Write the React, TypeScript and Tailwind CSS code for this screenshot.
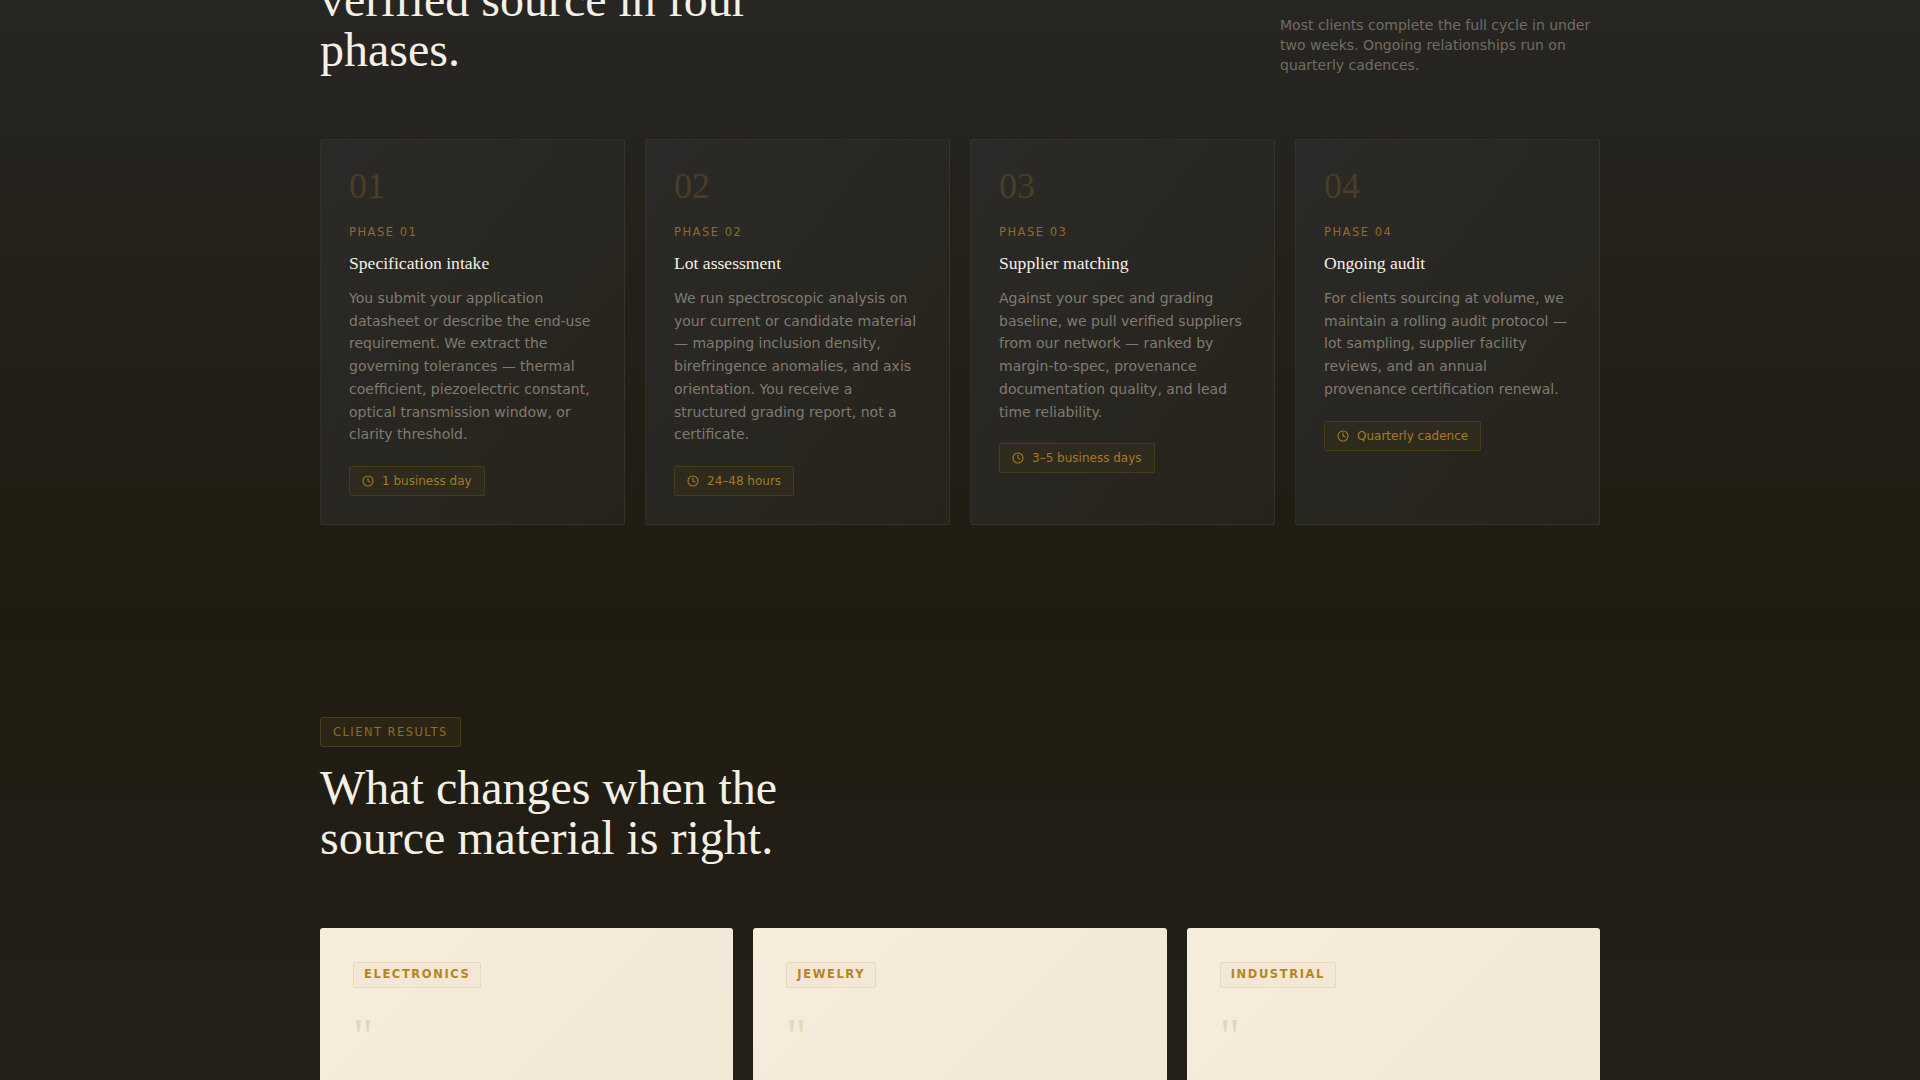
import { Clock } from 'lucide-react';

const sans = 'font-["DejaVu_Sans",sans-serif]';
const serif = 'font-["Liberation_Serif",serif]';

const phases = [
    {
        num: '01',
        label: 'PHASE 01',
        title: 'Specification intake',
        body: 'You submit your application datasheet or describe the end-use requirement. We extract the governing tolerances — thermal coefficient, piezoelectric constant, optical transmission window, or clarity threshold.',
        time: '1 business day',
    },
    {
        num: '02',
        label: 'PHASE 02',
        title: 'Lot assessment',
        body: 'We run spectroscopic analysis on your current or candidate material — mapping inclusion density, birefringence anomalies, and axis orientation. You receive a structured grading report, not a certificate.',
        time: '24–48 hours',
    },
    {
        num: '03',
        label: 'PHASE 03',
        title: 'Supplier matching',
        body: 'Against your spec and grading baseline, we pull verified suppliers from our network — ranked by margin-to-spec, provenance documentation quality, and lead time reliability.',
        time: '3–5 business days',
    },
    {
        num: '04',
        label: 'PHASE 04',
        title: 'Ongoing audit',
        body: 'For clients sourcing at volume, we maintain a rolling audit protocol — lot sampling, supplier facility reviews, and an annual provenance certification renewal.',
        time: 'Quarterly cadence',
    },
];

const results = ['ELECTRONICS', 'JEWELRY', 'INDUSTRIAL'];

function PhaseCard({ phase }: { phase: (typeof phases)[number] }) {
    return (
        <div className="rounded-[2px] border border-white/5 bg-gradient-to-br from-[#2a2a28] to-[#27231b] p-7">
            <div className={`${serif} text-[36px] leading-[36px] text-[#4a3e26] mb-[20px]`}>{phase.num}</div>
            <div className="text-[11.5px] tracking-[1.5px] leading-[17px] text-[#916c24] mb-[11px]">{phase.label}</div>
            <h3 className={`${serif} text-[17.6px] leading-[22px] text-[#f5f0e6] mb-[13px]`}>{phase.title}</h3>
            <p className="text-[14px] leading-[22.75px] text-[#807a70]">{phase.body}</p>
            <div className="mt-[20px] inline-flex h-[30px] items-center gap-2 rounded-[2px] border border-[#4a3a1c] bg-[#2f2a1e] px-3 text-[12px] text-[#a37a28]">
                <Clock size={12} strokeWidth={2.25} />
                <span>{phase.time}</span>
            </div>
        </div>
    );
}

export default function App() {
    return (
        <div className={`${sans} h-screen overflow-hidden bg-[#1f1b10]`}>
            {/* page is photographed scrolled down, so the first heading is cut */}
            <section className="-mt-[25px] bg-gradient-to-b from-[#282623] to-[#1f1b10] pb-24">
                <div className="mx-auto w-[1280px]">
                    <div className="flex items-end justify-between mb-[63px]">
                        <h2 className={`${serif} w-[480px] text-[48px] leading-[50.4px] text-[#f5f0e6]`}>
                            verified source in four phases.
                        </h2>
                        <p className="w-[320px] pb-px text-[14px] leading-[20px] text-[#716c63]">
                            Most clients complete the full cycle in under two weeks. Ongoing relationships run on quarterly cadences.
                        </p>
                    </div>
                    <div className="grid grid-cols-4 gap-5">
                        {phases.map((p) => (
                            <PhaseCard key={p.num} phase={p} />
                        ))}
                    </div>
                </div>
            </section>

            <section className="bg-gradient-to-b from-[#1f1b10] to-[#272522] pt-24 pb-24">
                <div className="mx-auto w-[1280px]">
                    <span className="inline-flex h-[30px] items-center rounded-[2px] border border-[#4a3a1c] bg-[#2c2414] px-3 pt-px text-[11.5px] tracking-[1.45px] text-[#916c24]">
                        CLIENT RESULTS
                    </span>
                    <h2 className={`${serif} mt-[16px] mb-[64px] w-[520px] text-[48px] leading-[50.4px] text-[#f5f0e6]`}>
                        What changes when the source material is right.
                    </h2>
                    <div className="grid grid-cols-3 gap-5">
                        {results.map((r) => (
                            <div key={r} className="h-[400px] rounded-[3px] bg-gradient-to-br from-[#f7eddd] to-[#f0e4d2] p-[33px]">
                                <span className="inline-flex h-[26px] items-center rounded-[2px] border border-[#e8d9b8] bg-[#f2e8d5] px-[10px] text-[11.5px] font-bold tracking-[1.6px] text-[#b8841c]">
                                    {r}
                                </span>
                                <div className={`${serif} mt-[23px] text-[50px] leading-none text-[#e8d6b4]`}>"</div>
                            </div>
                        ))}
                    </div>
                </div>
            </section>
        </div>
    );
}
